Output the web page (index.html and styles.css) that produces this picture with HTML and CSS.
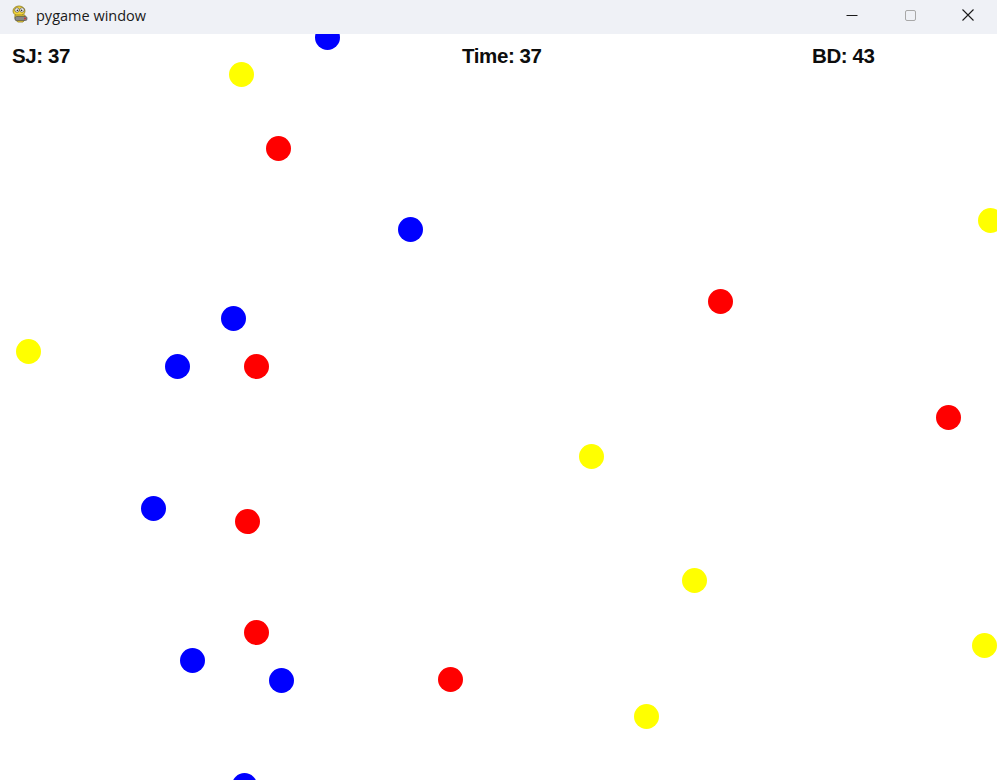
FILE: index.html
```html
<!DOCTYPE html>
<html>
<head>
<meta charset="utf-8">
<link rel="stylesheet" href="styles.css">
</head>
<body>
<div class="window">
  <div class="titlebar">
    <div class="title">
      <svg class="logo" width="20" height="20" viewBox="0 0 20 20">
        <ellipse cx="8" cy="6" rx="6" ry="5" fill="#f2d43a" stroke="#8a7a20" stroke-width="0.8"/>
        <circle cx="6" cy="5" r="2.2" fill="#fff" stroke="#333" stroke-width="0.6"/>
        <circle cx="11" cy="5" r="2.2" fill="#fff" stroke="#333" stroke-width="0.6"/>
        <circle cx="6.3" cy="5.2" r="0.8" fill="#111"/>
        <circle cx="10.7" cy="5.2" r="0.8" fill="#111"/>
        <path d="M4 10 Q3 15 7 17 L12 17 Q15 15 14 10 Z" fill="#f2d43a" stroke="#8a7a20" stroke-width="0.8"/>
        <rect x="4" y="11.5" width="12" height="4" rx="1.5" fill="#888" stroke="#444" stroke-width="0.6"/>
        <circle cx="14" cy="13.5" r="1" fill="#c33"/>
      </svg>
      <span class="title-text">pygame window</span>
    </div>
    <div class="controls">
      <div class="ctl"><svg width="12" height="12" viewBox="0 0 12 12"><line x1="0.5" y1="6.5" x2="11.5" y2="6.5" stroke="#1a1a1a" stroke-width="1"/></svg></div>
      <div class="ctl"><svg width="12" height="12" viewBox="0 0 12 12"><rect x="1.5" y="1.5" width="10" height="10" rx="1.5" fill="none" stroke="#a8a8a8" stroke-width="1"/></svg></div>
      <div class="ctl"><svg width="12" height="12" viewBox="0 0 12 12"><path d="M0.5 0.5 L11.5 11.5 M11.5 0.5 L0.5 11.5" stroke="#1a1a1a" stroke-width="1.1"/></svg></div>
    </div>
  </div>
  <div class="canvas">
    <div class="hud">
      <span class="label sj">SJ: 37</span>
      <span class="label time">Time: 37</span>
      <span class="label bd">BD: 43</span>
    </div>
    <div class="dot blue" style="left:327px;top:3px"></div>
    <div class="dot blue" style="left:410px;top:195px"></div>
    <div class="dot blue" style="left:233px;top:284px"></div>
    <div class="dot blue" style="left:177px;top:332px"></div>
    <div class="dot blue" style="left:153px;top:474px"></div>
    <div class="dot blue" style="left:192px;top:626px"></div>
    <div class="dot blue" style="left:281px;top:646px"></div>
    <div class="dot blue" style="left:244px;top:751px"></div>

    <div class="dot yellow" style="left:241px;top:40px"></div>
    <div class="dot yellow" style="left:990px;top:186px"></div>
    <div class="dot yellow" style="left:28px;top:317px"></div>
    <div class="dot yellow" style="left:591px;top:422px"></div>
    <div class="dot yellow" style="left:694px;top:546px"></div>
    <div class="dot yellow" style="left:984px;top:611px"></div>
    <div class="dot yellow" style="left:646px;top:682px"></div>

    <div class="dot red" style="left:278px;top:114px"></div>
    <div class="dot red" style="left:720px;top:267px"></div>
    <div class="dot red" style="left:256px;top:332px"></div>
    <div class="dot red" style="left:948px;top:383px"></div>
    <div class="dot red" style="left:247px;top:487px"></div>
    <div class="dot red" style="left:256px;top:598px"></div>
    <div class="dot red" style="left:450px;top:645px"></div>
  </div>
</div>
</body>
</html>
```

FILE: styles.css
```css
html, body {
  margin: 0;
  padding: 0;
  background: #ffffff;
  overflow: hidden;
}
.window {
  width: 997px;
  height: 780px;
  display: flex;
  flex-direction: column;
}
.titlebar {
  height: 34px;
  flex: 0 0 34px;
  background: #eff1f6;
  display: flex;
  align-items: center;
  justify-content: space-between;
}
.title {
  display: flex;
  align-items: center;
  padding-left: 11px;
  gap: 5px;
}
.logo {
  display: block;
  position: relative;
  top: -2px;
}
.title-text {
  font-family: "Segoe UI", "Open Sans", "Noto Sans", sans-serif;
  font-size: 14.5px;
  color: #1a1a1a;
  position: relative;
  top: -2px;
}
.controls {
  display: flex;
  height: 100%;
}
.ctl {
  width: 58px;
  display: flex;
  align-items: center;
  justify-content: center;
  position: relative;
  top: -2px;
}
.ctl svg { display: block; }
.canvas {
  flex: 1;
  position: relative;
  overflow: hidden;
  background: #ffffff;
}
.hud {
  position: absolute;
  left: 0;
  top: 0;
  width: 100%;
  height: 40px;
}
.label {
  position: absolute;
  top: 10px;
  font-family: "Liberation Sans", Arial, sans-serif;
  font-weight: bold;
  font-size: 20.5px;
  color: #0d0d0d;
  letter-spacing: -0.4px;
}
.sj { left: 12px; }
.time { left: 462px; }
.bd { left: 812px; }
.dot {
  position: absolute;
  width: 25px;
  height: 25px;
  margin-left: -12.5px;
  margin-top: -12.5px;
  border-radius: 50%;
}
.blue { background: #0000ff; }
.yellow { background: #ffff00; }
.red { background: #ff0000; }
```
